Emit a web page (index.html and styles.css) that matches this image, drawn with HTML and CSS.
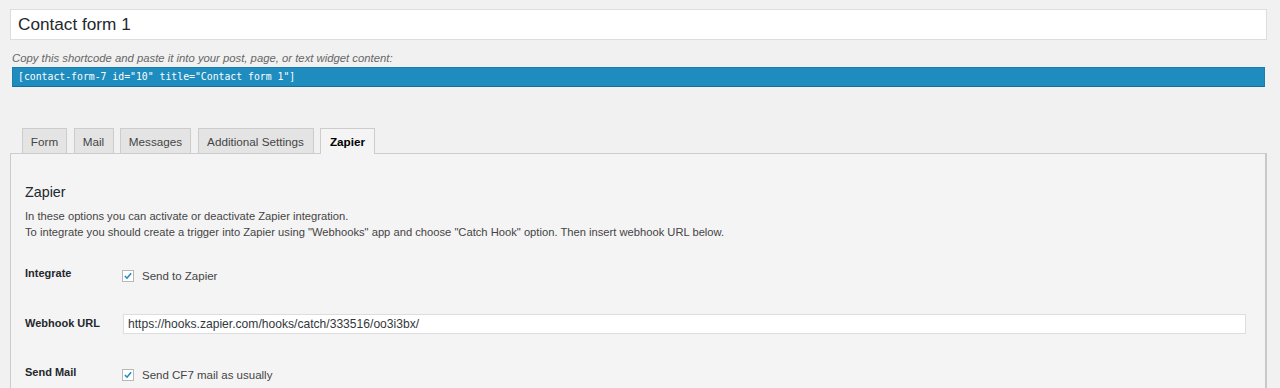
FILE: index.html
```html
<!DOCTYPE html>
<html>
<head>
<meta charset="utf-8">
<link rel="stylesheet" href="styles.css">
</head>
<body>
<div class="wrap">
  <div class="title-input">Contact form 1</div>
  <p class="hint">Copy this shortcode and paste it into your post, page, or text widget content:</p>
  <div class="shortcode">[contact-form-7 id="10" title="Contact form 1"]</div>

  <div class="tabs">
    <div class="tab">Form</div>
    <div class="tab">Mail</div>
    <div class="tab">Messages</div>
    <div class="tab">Additional Settings</div>
    <div class="tab active">Zapier</div>
  </div>
  <div class="panel">
    <h2 class="panel-title">Zapier</h2>
    <p class="desc">In these options you can activate or deactivate Zapier integration.<br>To integrate you should create a trigger into Zapier using "Webhooks" app and choose "Catch Hook" option. Then insert webhook URL below.</p>
    <div class="rows">
      <div class="row">
        <div class="label">Integrate</div>
        <div class="field">
          <span class="check"><svg viewBox="0 0 12 12" width="12" height="12"><path d="M2.3 5.9 L4.8 8.6 L9.8 2.8" fill="none" stroke="#1e8cbe" stroke-width="1.9"/></svg></span>
          <span class="check-label">Send to Zapier</span>
        </div>
      </div>
      <div class="row">
        <div class="label">Webhook URL</div>
        <div class="field">
          <div class="url-input">https://hooks.zapier.com/hooks/catch/333516/oo3i3bx/</div>
        </div>
      </div>
      <div class="row">
        <div class="label">Send Mail</div>
        <div class="field">
          <span class="check"><svg viewBox="0 0 12 12" width="12" height="12"><path d="M2.3 5.9 L4.8 8.6 L9.8 2.8" fill="none" stroke="#1e8cbe" stroke-width="1.9"/></svg></span>
          <span class="check-label">Send CF7 mail as usually</span>
        </div>
      </div>
    </div>
  </div>
</div>
</body>
</html>
```

FILE: styles.css
```css
html, body {
  margin: 0;
  padding: 0;
  background: #f1f1f1;
  height: 388px;
  overflow: hidden;
}
body {
  font-family: "Liberation Sans", Arial, sans-serif;
  color: #23282d;
  font-size: 11.7px;
}
.wrap {
  padding: 9px 13px 0 10px;
}
.title-input {
  box-sizing: border-box;
  height: 31px;
  background: #fff;
  border: 1px solid #ddd;
  font-size: 17.2px;
  line-height: 29px;
  padding-left: 7px;
  color: #23282d;
}
.hint {
  margin: 11px 0 0 2px;
  font-size: 11.3px;
  font-style: italic;
  color: #666;
  line-height: 14px;
}
.shortcode {
  box-sizing: border-box;
  margin: 2px 2px 0 2px;
  height: 20px;
  background: #1e8cbe;
  border: 1px solid #1a7fae;
  border-bottom-color: #166d96;
  color: #fff;
  font-family: "DejaVu Sans Mono", "Liberation Mono", monospace;
  font-size: 9.8px;
  line-height: 18px;
  padding-left: 5px;
}
.tabs {
  display: flex;
  gap: 6.5px;
  margin: 41px 0 0 12px;
  position: relative;
  z-index: 1;
}
.tab {
  box-sizing: border-box;
  height: 25px;
  padding: 0 4px;
  background: #e4e4e4;
  border: 1px solid #ccc;
  border-bottom: none;
  line-height: 25px;
  font-size: 11.7px;
  color: #444;
  text-align: center;
  white-space: nowrap;
}
.tab:nth-child(1) { width: 45px; }
.tab:nth-child(2) { width: 40px; }
.tab:nth-child(3) { width: 71px; }
.tab:nth-child(4) { width: 116px; }
.tab.active {
  width: 55px;
  background: #f4f4f4;
  color: #000;
  font-weight: bold;
  height: 26px;
  margin-bottom: -1px;
}
.panel {
  box-sizing: border-box;
  background: #f4f4f4;
  border: 1px solid #ccc;
  border-right: 2px solid #c8c8c8;
  height: 260px;
  padding: 29px 14px 0 14px;
}
.panel-title {
  margin: 0;
  font-size: 14.3px;
  font-weight: normal;
  line-height: 18px;
  color: #23282d;
}
.desc {
  margin: 7px 0 0 0;
  font-size: 11.2px;
  line-height: 16px;
  color: #444;
}
.rows {
  margin-top: 25px;
}
.row {
  display: flex;
  align-items: flex-start;
  height: 49.5px;
}
.label {
  width: 98px;
  font-weight: bold;
  font-size: 11px;
  line-height: 16px;
  color: #23282d;
}
.field {
  flex: 1;
  display: flex;
  align-items: center;
  height: 16px;
}
.check {
  box-sizing: border-box;
  width: 12px;
  height: 12px;
  border: 1px solid #b4b9be;
  background: #fff;
  display: flex;
  align-items: center;
  justify-content: center;
  margin-top: 6px;
  margin-left: -1px;
}
.check svg { display: block; }
.check-label {
  margin-left: 8px;
  font-size: 11.5px;
  color: #444;
  line-height: 16px;
  margin-top: 6px;
}
.url-input {
  box-sizing: border-box;
  width: 1123px;
  height: 20px;
  background: #fff;
  border: 1px solid #ddd;
  font-size: 12.1px;
  line-height: 18px;
  padding-left: 4px;
  color: #32373c;
  margin-top: 2px;
}
```
